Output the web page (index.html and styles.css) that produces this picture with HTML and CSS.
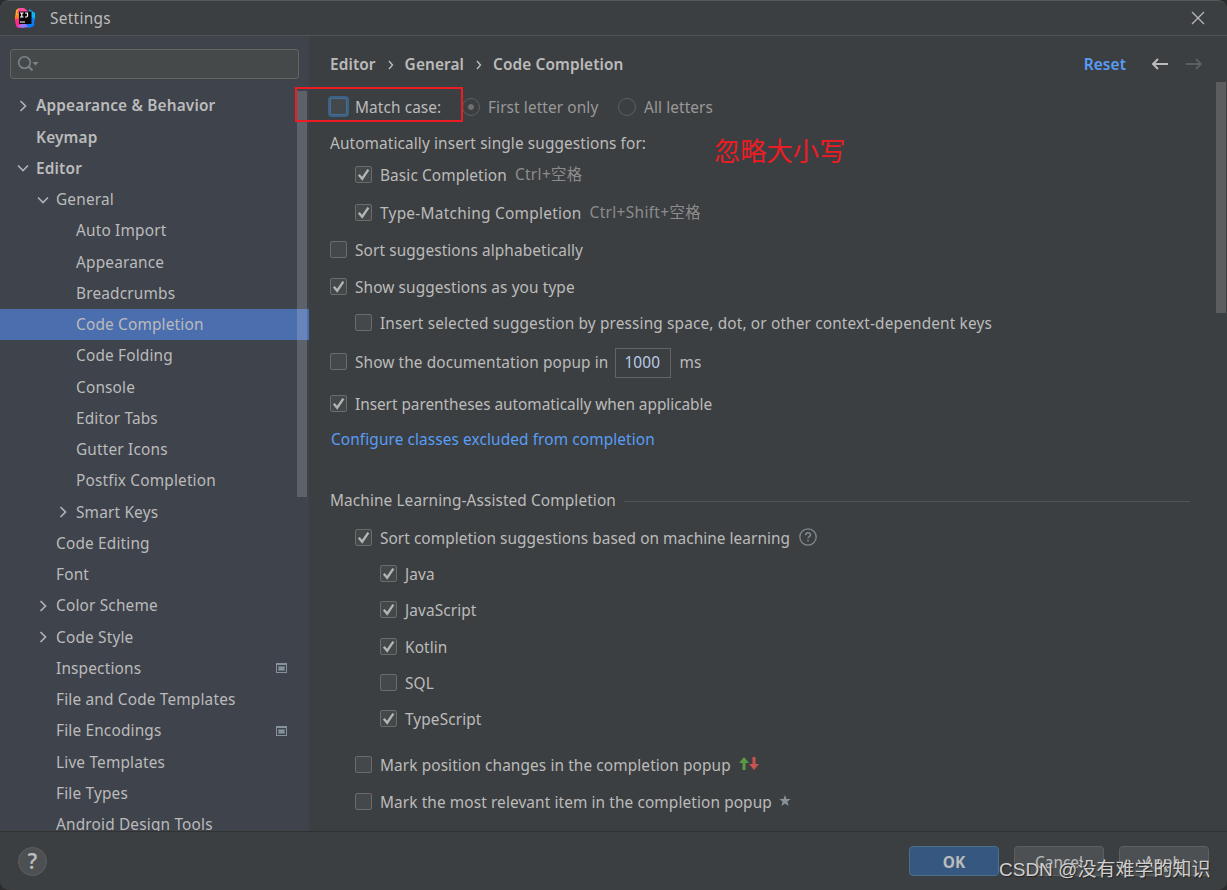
FILE: index.html
```
<!DOCTYPE html>
<html lang="en">
<head>
  <meta charset="UTF-8" />
  <meta name="viewport" content="width=device-width, initial-scale=1.0"/>
  <title>Settings</title>
  <link rel="stylesheet" href="styles.css">
</head>
<body>
  <!-- shared icons -->
  <svg class="sprite" width="0" height="0">
    <symbol id="right" viewBox="0 0 16 16"><path d="M5.5 3l5 5-5 5" fill="none" stroke="currentColor" stroke-width="1.7"/></symbol>
    <symbol id="down" viewBox="0 0 16 16"><path d="M3 5.5l5 5 5-5" fill="none" stroke="currentColor" stroke-width="1.7"/></symbol>
    <symbol id="project" viewBox="0 0 11 10"><path d="M0 0h11v10H0zM1 2v7h9V2z" fill="#87939a" fill-rule="evenodd"/><path d="M2 3h7v5H2z" fill="#65717a"/><path d="M3 4h5v3H3z" fill="#87939a"/></symbol>
    <symbol id="check" viewBox="0 0 16 16"><path d="M3 8.200l3.600 4.300 6.600-9.700" fill="none" stroke="#b4b4b4" stroke-width="2.500"/></symbol>
  </svg>

  <div class="window">
    <header class="titlebar">
      <svg class="logo" width="20" height="20" viewBox="0 0 20 20">
        <path d="M1 2l3-2 6 4-4 6-6 1z" fill="#fdb60d"/>
        <path d="M4 0h5l5 4-8 5-4-4z" fill="#fe4a9c"/>
        <path d="M0 8l7-3v9l-5 1-2-2z" fill="#fc801d"/>
        <path d="M0 11l6-1 6 9-9 1-2-2z" fill="#fe2887"/>
        <path d="M14 2l6 3-1 13-5 2-6-2 5-8z" fill="#087cfa"/>
        <path d="M14 1l6 4v6l-5-3z" fill="#07b8f5"/>
        <path d="M2 18l8-3 3 4-6 1z" fill="#9775f8"/>
        <path d="M4 3.500h12.500V16H4z" fill="#0a0506"/>
        <path d="M5 5h3.500M6.800 5v4M5 9h3.500M10 5h2.500v2.800q0 1.200-1.200 1.200H10M5 14h5" fill="none" stroke="#fff" stroke-width="1.200"/>
      </svg>
      <span class="title">Settings</span>
      <svg class="close" width="14" height="14" viewBox="0 0 14 14"><path d="M1 1l12 12M13 1L1 13" stroke="#bbb" stroke-width="1.200"/></svg>
    </header>

    <div class="main">
      <nav class="sidebar">
        <div class="search">
          <svg width="24" height="18" viewBox="0 0 24 18">
            <circle cx="7.500" cy="7.500" r="5.800" fill="none" stroke="#7c868b" stroke-width="1.500"/>
            <path d="M11.500 11.500l4 4" stroke="#7c868b" stroke-width="1.800"/>
            <path d="M15.500 7h6l-3 3.500z" fill="#7c868b"/>
          </svg>
        </div>
        <div class="tree">
          <div class="node top"><svg class="arrow"><use href="#right"/></svg>Appearance &amp; Behavior</div>
          <div class="node top"><span class="arrow"></span>Keymap</div>
          <div class="node top"><svg class="arrow"><use href="#down"/></svg>Editor</div>
          <div class="node level1"><svg class="arrow"><use href="#down"/></svg>General</div>
          <div class="node level2"><span class="arrow"></span>Auto Import</div>
          <div class="node level2"><span class="arrow"></span>Appearance</div>
          <div class="node level2"><span class="arrow"></span>Breadcrumbs</div>
          <div class="node level2 selected"><span class="arrow"></span>Code Completion</div>
          <div class="node level2"><span class="arrow"></span>Code Folding</div>
          <div class="node level2"><span class="arrow"></span>Console</div>
          <div class="node level2"><span class="arrow"></span>Editor Tabs</div>
          <div class="node level2"><span class="arrow"></span>Gutter Icons</div>
          <div class="node level2"><span class="arrow"></span>Postfix Completion</div>
          <div class="node level2"><svg class="arrow"><use href="#right"/></svg>Smart Keys</div>
          <div class="node level1"><span class="arrow"></span>Code Editing</div>
          <div class="node level1"><span class="arrow"></span>Font</div>
          <div class="node level1"><svg class="arrow"><use href="#right"/></svg>Color Scheme</div>
          <div class="node level1"><svg class="arrow"><use href="#right"/></svg>Code Style</div>
          <div class="node level1"><span class="arrow"></span>Inspections<svg class="project"><use href="#project"/></svg></div>
          <div class="node level1"><span class="arrow"></span>File and Code Templates</div>
          <div class="node level1"><span class="arrow"></span>File Encodings<svg class="project"><use href="#project"/></svg></div>
          <div class="node level1"><span class="arrow"></span>Live Templates</div>
          <div class="node level1"><span class="arrow"></span>File Types</div>
          <div class="node level1"><span class="arrow"></span>Android Design Tools</div>
        </div>
        <div class="scrollbar tree-scroll"></div>
      </nav>

      <section class="content">
        <div class="crumbs">
          <span>Editor</span><svg class="sep" viewBox="0 0 6 10"><path d="M1 1l3.500 4L1 9" fill="none" stroke="#bbb" stroke-width="1.400"/></svg>
          <span>General</span><svg class="sep" viewBox="0 0 6 10"><path d="M1 1l3.500 4L1 9" fill="none" stroke="#bbb" stroke-width="1.400"/></svg>
          <span>Code Completion</span>
          <a class="reset">Reset</a>
          <svg class="back" width="18" height="12" viewBox="0 0 18 12"><path d="M17 6H2M7 1L2 6l5 5" fill="none" stroke="#bbb" stroke-width="2"/></svg>
          <svg class="forward" width="18" height="12" viewBox="0 0 18 12"><path d="M1 6h15M11 1l5 5-5 5" fill="none" stroke="#5c5e60" stroke-width="2"/></svg>
        </div>

        <div class="options">
          <div class="row match">
            <span class="box focused"></span><span class="match-label">Match case:</span>
            <span class="radio on"></span><span class="dim first">First letter only</span>
            <span class="radio"></span><span class="dim">All letters</span>
          </div>
          <div class="row">Automatically insert single suggestions for:</div>
          <div class="row in1 tight"><span class="box"><svg><use href="#check"/></svg></span>Basic Completion<span class="key">Ctrl+空格</span></div>
          <div class="row in1 loose wide"><span class="box"><svg><use href="#check"/></svg></span>Type-Matching Completion<span class="key">Ctrl+Shift+空格</span></div>
          <div class="row mid"><span class="box"></span>Sort suggestions alphabetically</div>
          <div class="row mid"><span class="box"><svg><use href="#check"/></svg></span>Show suggestions as you type</div>
          <div class="row in1 keys"><span class="box"></span>Insert selected suggestion by pressing space, dot, or other context-dependent keys</div>
          <div class="row popup"><span class="box"></span>Show the documentation popup in<span class="field">1000</span>ms</div>
          <div class="row parens"><span class="box"><svg><use href="#check"/></svg></span>Insert parentheses automatically when applicable</div>
          <div class="row link"><a>Configure classes excluded from completion</a></div>

          <div class="row section">Machine Learning-Assisted Completion<span class="rule"></span></div>
          <div class="row in1 loose ml"><span class="box"><svg><use href="#check"/></svg></span>Sort completion suggestions based on machine learning
            <svg class="hint" width="18" height="18" viewBox="0 0 18 18"><circle cx="9" cy="9" r="8.200" fill="none" stroke="#7f898f" stroke-width="1.300"/><path d="M6.600 7.200q0-2.400 2.400-2.400t2.400 2.100c0 1.600-2.400 1.700-2.400 3.400M9 11.800v1.600" fill="none" stroke="#7f898f" stroke-width="1.500"/></svg>
          </div>
          <div class="row in2"><span class="box"><svg><use href="#check"/></svg></span>Java</div>
          <div class="row in2"><span class="box"><svg><use href="#check"/></svg></span>JavaScript</div>
          <div class="row in2 mid"><span class="box"><svg><use href="#check"/></svg></span>Kotlin</div>
          <div class="row in2"><span class="box"></span>SQL</div>
          <div class="row in2"><span class="box"><svg><use href="#check"/></svg></span>TypeScript</div>
          <div class="row in1 marks"><span class="box"></span>Mark position changes in the completion popup
            <svg class="updown" width="20" height="14" viewBox="0 0 20 14"><path d="M5 0l5 6H6.500v7h-3V6H0z" fill="#5a9a43"/><path d="M15 13l5-6h-3.500V0h-3v7H10z" fill="#c75450"/></svg>
          </div>
          <div class="row in1 mid"><span class="box"></span>Mark the most relevant item in the completion popup
            <svg class="star" width="12" height="11" viewBox="0 0 12 11"><path d="M6 0l1.500 3.900 4.300.1-3.400 2.600L9.600 11 6 8.500 2.400 11l1.200-4.400L.2 4l4.300-.1z" fill="#87939a"/></svg>
          </div>
        </div>
        <div class="scrollbar content-scroll"></div>
      </section>
    </div>

    <footer class="footer">
      <span class="help">?</span>
      <button class="btn primary">OK</button>
      <button class="btn">Cancel</button>
      <button class="btn">Apply</button>
    </footer>

    <!-- annotations -->
    <div class="mark-box"></div>
    <div class="mark-text">忽略大小写</div>
    <div class="watermark">CSDN @没有难学的知识</div>
  </div>
</body>
</html>
```
FILE: styles.css
```
:root {
  --bg: #3c3f41;
  --side: #3f434c;
  --text: #bbbbbb;
  --link: #589df6;
  --line: #515456;
}

* { box-sizing: border-box; margin: 0; padding: 0; }
body {
  background: #2b2d2e;
  color: var(--text);
  font-family: "Noto Sans", "Noto Sans CJK SC", sans-serif;
  font-size: 15.4px;
  line-height: 24px;
  letter-spacing: .1px;
  overflow: hidden;
}
.sprite { position: absolute; }
.window {
  position: relative;
  display: flex;
  flex-direction: column;
  width: 1227px;
  height: 890px;
  background: var(--bg);
  border-top: 1px solid #55585a;
  border-radius: 9px;
  overflow: hidden;
  white-space: nowrap;
}

/* title */
.titlebar {
  display: flex;
  align-items: center;
  height: 35px;
  padding: 0 22px 0 15px;
  border-bottom: 1px solid var(--line);
}
.title { margin-left: 15px; padding-top: 2px; letter-spacing: .3px; }
.close { margin-left: auto; }

.main { display: flex; height: 795px; }

/* tree */
.sidebar {
  position: relative;
  width: 309px;
  background: var(--side);
  overflow: hidden;
}
.search {
  display: flex;
  align-items: center;
  width: 289px;
  height: 30px;
  margin: 13px 0 11px 10px;
  padding-left: 6px;
  background: #45494a;
  border: 1px solid #646464;
  border-radius: 3px;
}
.node {
  display: flex;
  align-items: center;
  height: 31.26px;
  padding: 1.5px 0 0 15px;
  letter-spacing: .17px;
}
.top { font-weight: 600; }
.level1 { padding-left: 35px; }
.level2 { padding-left: 55px; }
.selected { background: #4b6eaf; }
.arrow {
  flex: none;
  width: 16px;
  height: 16px;
  margin: 0 5px 1px 0;
  color: #afb1b3;
}
.project {
  width: 11px;
  height: 10px;
  margin: 0 22px 1px auto;
}
.scrollbar {
  position: absolute;
  width: 10px;
  background: rgba(255, 255, 255, .16);
}
.tree-scroll { top: 55px; left: 297px; height: 406px; }
.content-scroll { top: 46px; right: 1px; height: 231px; }

/* right side */
.content { position: relative; flex: 1; padding-left: 21px; }
.crumbs {
  display: flex;
  align-items: center;
  height: 24px;
  margin-top: 16px;
  padding: 2px 24px 0 0;
  font-weight: 600;
}
.sep { width: 6px; height: 10px; margin: 0 11px 1px 12px; }
.reset { margin-left: auto; color: var(--link); }
.back { margin: 0 0 2px 25px; }
.forward { margin: 0 0 2px 16px; }

.options { padding-top: 19px; }
.row {
  display: flex;
  align-items: center;
  height: 24px;
  margin-top: 12px;
  padding-top: 2px;
}
.match { margin-top: 0; }
.in1 { padding-left: 25px; }
.in2 { padding-left: 50px; }
.tight { margin-top: 8px; }
.mid { margin-top: 13px; }
.loose { margin-top: 14px; }
.wide { letter-spacing: .27px; }
.keys { letter-spacing: .14px; }
.popup { margin-top: 15px; }
.parens { margin-top: 18px; letter-spacing: -.04px; }
.link { margin-top: 11px; padding-left: 1px; color: var(--link); }
.section { margin-top: 37px; }
.ml { letter-spacing: .05px; }
.marks { margin-top: 22px; }

.box {
  flex: none;
  width: 17px;
  height: 17px;
  margin: 0 8px 3px 0;
  background: #43494a;
  border: 1px solid #6b6b6b;
  border-radius: 2px;
}
.box svg { display: block; width: 15px; height: 15px; }
.focused {
  border-color: #466d94;
  box-shadow: 0 0 0 2px #3d6185;
}
.radio {
  flex: none;
  width: 18px;
  height: 18px;
  margin: 0 8px 2px 0;
  border: 1px solid #5c5e60;
  border-radius: 50%;
}
.radio.on { background: radial-gradient(circle, #6e6e6e 2.500px, transparent 3.500px); }
.match-label { width: 107px; }
.dim { color: #999; }
.first { width: 130px; }
.key {
  margin: 0 0 2px 8px;
  color: #8c8c8c;
  letter-spacing: .35px;
}
.field {
  width: 56px;
  height: 30px;
  margin: 0 8px 0 7px;
  padding-left: 8px;
  border: 1px solid #646464;
  line-height: 28px;
  color: #b8cbe8;
}
.rule { width: 566px; height: 1px; margin-left: 8px; background: var(--line); }
.hint { margin: 0 0 5px 9px; }
.updown { margin: 0 0 4px 8px; }
.star { margin: 0 0 5px 7px; }

/* footer */
.footer {
  display: flex;
  align-items: center;
  height: 59px;
  padding: 0 18px;
  border-top: 1px solid #323232;
}
.help {
  width: 29px;
  height: 29px;
  margin-right: auto;
  background: #4c5052;
  border: 1px solid #5e6060;
  border-radius: 50%;
  text-align: center;
  line-height: 26px;
  font-size: 21px;
  font-weight: 600;
}
.btn {
  width: 90px;
  height: 30px;
  margin-left: 15px;
  padding-top: 3px;
  background: #4c5052;
  border: 1px solid #5e6060;
  border-radius: 4px;
  color: var(--text);
  font: inherit;
}
.primary {
  background: #365880;
  border-color: #4c708c;
  font-weight: 700;
}

/* annotations */
.mark-box {
  position: absolute;
  top: 86px;
  left: 295px;
  width: 168px;
  height: 35px;
  border: 2px solid #ed1c24;
}
.mark-text {
  position: absolute;
  top: 129px;
  left: 714px;
  color: #ed1c24;
  font-family: "Noto Sans CJK SC", sans-serif;
  font-size: 26.2px;
  line-height: 40px;
}
.watermark {
  position: absolute;
  top: 854px;
  left: 999px;
  color: #d0d0d0;
  font-family: "Liberation Sans", "Noto Sans CJK SC", sans-serif;
  font-size: 19px;
  line-height: 30px;
  letter-spacing: 0;
  text-shadow: 1px 1px 1px #222;
}
```
